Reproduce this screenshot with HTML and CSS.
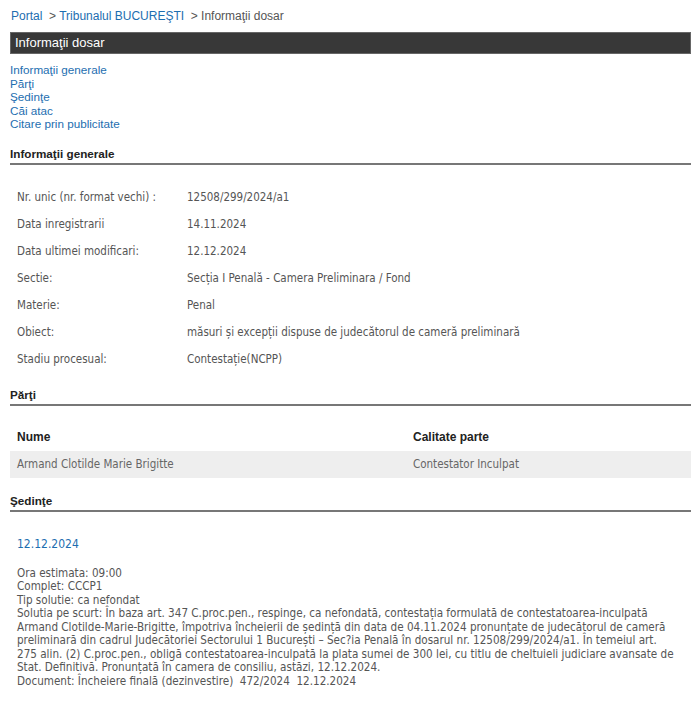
FILE: index.html
```html
<!DOCTYPE html>
<html lang="ro">
<head>
    <meta charset="UTF-8">
    <meta name="viewport" content="width=device-width, initial-scale=1.0">
    <title>Informaţii dosar</title>
    <link rel="stylesheet" href="styles.css">
</head>
<body>
    <div class="breadcrumb">
        <a href="#">Portal</a>&nbsp; &gt; <a href="#">Tribunalul BUCUREŞTI</a>&nbsp; &gt; <span>Informaţii dosar</span>
    </div>

    <div class="title-bar">Informaţii dosar</div>

    <ul class="menu">
        <li><a href="#generale">Informaţii generale</a></li>
        <li><a href="#parti">Părţi</a></li>
        <li><a href="#sedinte">Şedinţe</a></li>
        <li><a href="#">Căi atac</a></li>
        <li><a href="#">Citare prin publicitate</a></li>
    </ul>

    <h2 class="section-title" id="generale">Informaţii generale</h2>
    <table class="info">
        <tr><td class="label">Nr. unic (nr. format vechi) :</td><td>12508/299/2024/a1</td></tr>
        <tr><td class="label">Data inregistrarii</td><td>14.11.2024</td></tr>
        <tr><td class="label">Data ultimei modificari:</td><td>12.12.2024</td></tr>
        <tr><td class="label">Sectie:</td><td>Secția I Penală - Camera Preliminara / Fond</td></tr>
        <tr><td class="label">Materie:</td><td>Penal</td></tr>
        <tr><td class="label">Obiect:</td><td>măsuri și excepții dispuse de judecătorul de cameră preliminară</td></tr>
        <tr><td class="label">Stadiu procesual:</td><td>Contestație(NCPP)</td></tr>
    </table>

    <h2 class="section-title second" id="parti">Părţi</h2>
    <table class="parti">
        <tr><th class="col-nume">Nume</th><th>Calitate parte</th></tr>
        <tr class="odd"><td>Armand Clotilde Marie Brigitte</td><td>Contestator Inculpat</td></tr>
    </table>

    <h2 class="section-title third" id="sedinte">Şedinţe</h2>
    <div class="sedinta">
        <div class="sedinta-data">12.12.2024</div>
        <p class="sedinta-text">
            Ora estimata: 09:00<br>
            Complet: CCCP1<br>
            Tip solutie: ca nefondat<br>
            Solutia pe scurt: În baza art. 347 C.proc.pen., respinge, ca nefondată, contestația formulată de contestatoarea-inculpată<br>
            Armand Clotilde-Marie-Brigitte, împotriva încheierii de ședință din data de 04.11.2024 pronunțate de judecătorul de cameră<br>
            preliminară din cadrul Judecătoriei Sectorului 1 București – Sec?ia Penală în dosarul nr. 12508/299/2024/a1. În temeiul art.<br>
            275 alin. (2) C.proc.pen., obligă contestatoarea-inculpată la plata sumei de 300 lei, cu titlu de cheltuieli judiciare avansate de<br>
            Stat. Definitivă. Pronunțată în camera de consiliu, astăzi, 12.12.2024.<br>
            Document: Încheiere finală (dezinvestire)&nbsp; 472/2024&nbsp; 12.12.2024
        </p>
    </div>
</body>
</html>
```

FILE: styles.css
```css
body { margin: 8px 9px 0 10px; font-family: "Liberation Sans", Arial, sans-serif; font-size: 12px; color: #333; background: #fff; }
a { color: #1d6eb0; text-decoration: none; }

.breadcrumb { font-size: 12px; color: #555; padding: 0 1px; line-height: 16px; }

.title-bar { margin-top: 8px; background: #383838; border: 1px solid #666; color: #fff; font-size: 13px; line-height: 20px; padding: 0 4px; }

.menu { list-style: none; margin: 9px 0 0; padding: 0; line-height: 13.5px; font-size: 11.7px; }

.section-title { margin: 15px 0 0; padding: 0 0 1px; font-size: 11.7px; font-weight: bold; color: #222; border-bottom: 2px solid #777; line-height: 16px; }
.section-title.second { margin-top: 14px; }
.section-title.third { margin-top: 15px; }

.info { border-collapse: collapse; margin-top: 19px; font-family: "DejaVu Sans Condensed", Tahoma, sans-serif; font-size: 11.5px; color: #555; }
.info td { padding: 0 7px; height: 27px; }
.info td.label { width: 156px; }

.parti { width: 100%; border-collapse: collapse; margin-top: 18px; }
.parti th { text-align: left; font-size: 12px; color: #222; padding: 6px 7px 7px; }
.parti th.col-nume { width: 382px; }
.parti td { font-family: "DejaVu Sans Condensed", Tahoma, sans-serif; font-size: 11.5px; color: #666; padding: 0 7px; height: 27px; }
.parti tr.odd { background: #eee; }

.sedinta { padding: 0 7px; font-family: "DejaVu Sans Condensed", Tahoma, sans-serif; font-size: 11.6px; color: #555; }
.sedinta-data { color: #1d6eb0; font-size: 12px; margin-top: 25px; }
.sedinta-text { margin: 16px 0 0; line-height: 13.5px; white-space: nowrap; }
```
